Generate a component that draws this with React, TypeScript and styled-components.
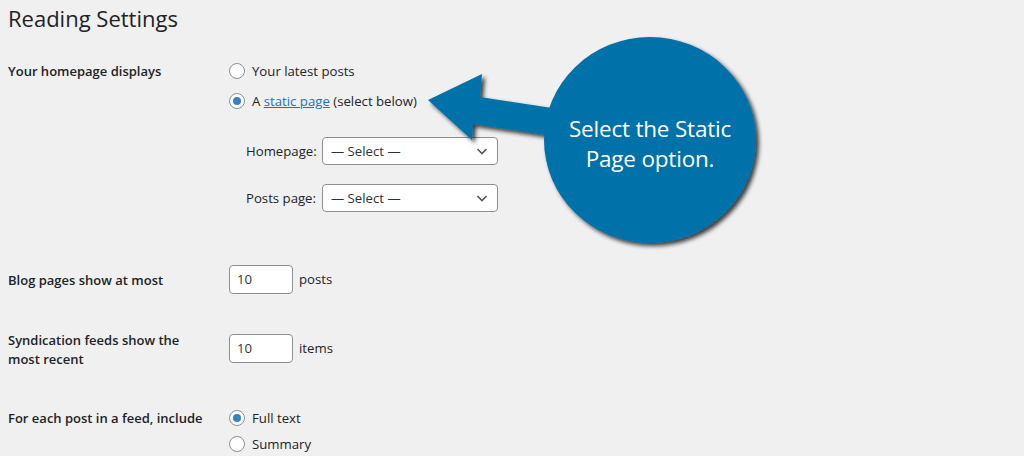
import React from 'react';
import styled, { createGlobalStyle } from 'styled-components';

const GlobalStyle = createGlobalStyle`
  html, body {
    margin: 0;
    padding: 0;
    background: #f0f0f1;
  }
  body {
    font-family: 'Open Sans', 'Noto Sans', sans-serif;
    color: #1d2327;
    font-size: 13px;
  }
`;

// Page
const Page = styled.div`
  position: relative;
  width: 1024px;
  height: 456px;
  overflow: hidden;
  padding: 0 8px;
  box-sizing: border-box;
`;

const Title = styled.h1`
  margin: 4px 0 0;
  font-size: 22px;
  font-weight: 400;
  line-height: 29px;
  color: #1d2327;
`;

const Form = styled.div`
  display: flex;
  flex-direction: column;
`;

interface RowProps {
  gap: number;
}

const Row = styled.div<RowProps>`
  display: grid;
  grid-template-columns: 221px 1fr;
  margin-top: ${(p: RowProps) => p.gap}px;
`;

interface LabelProps {
  top: number;
  lh?: number;
}

const RowLabel = styled.div<LabelProps>`
  width: 200px;
  padding-top: ${(p: LabelProps) => p.top}px;
  font-size: 13px;
  font-weight: 600;
  line-height: ${(p: LabelProps) => p.lh ?? 20}px;
`;

const Field = styled.div`
  display: flex;
  flex-direction: column;
`;

interface OptionProps {
  h: number;
}

const Option = styled.label<OptionProps>`
  display: flex;
  align-items: center;
  height: ${(p: OptionProps) => p.h}px;
  font-size: 13.2px;
  gap: 7px;
`;

interface RadioProps {
  checked?: boolean;
}

const Radio = styled.span<RadioProps>`
  width: 16px;
  height: 16px;
  box-sizing: border-box;
  border: 1px solid #8c8f94;
  border-radius: 50%;
  background: #fff;
  display: flex;
  align-items: center;
  justify-content: center;

  &::after {
    content: '';
    width: 8px;
    height: 8px;
    border-radius: 50%;
    background: ${(p: RadioProps) => (p.checked ? '#3582c4' : 'transparent')};
  }
`;

const Link = styled.a`
  color: #2271b1;
  text-decoration: underline;
`;

const SelectList = styled.div`
  display: flex;
  flex-direction: column;
  gap: 19px;
  margin-top: 21px;
  padding-left: 17px;
`;

const SelectRow = styled.div`
  display: flex;
  align-items: center;
  font-size: 13.2px;
`;

const SelectLabel = styled.span`
  width: 76px;
`;

const Select = styled.div`
  width: 176px;
  height: 28px;
  box-sizing: border-box;
  border: 1px solid #8c8f94;
  border-radius: 4px;
  background: #fff;
  display: flex;
  align-items: center;
  justify-content: space-between;
  padding: 0 8px;
  font-size: 13.2px;
  color: #2c3338;
`;

interface InputRowProps {
  offset?: number;
}

const InputRow = styled.div<InputRowProps>`
  display: flex;
  align-items: flex-start;
  gap: 6px;
  margin-top: ${(p: InputRowProps) => p.offset ?? 0}px;
  font-size: 13.2px;
  line-height: 29px;
`;

const NumberInput = styled.div`
  width: 64px;
  height: 29px;
  box-sizing: border-box;
  border: 1px solid #8c8f94;
  border-radius: 4px;
  background: #fff;
  display: flex;
  align-items: center;
  padding-left: 7px;
  font-size: 13.2px;
  color: #2c3338;
`;

// Callout overlay
const Overlay = styled.div`
  position: absolute;
  left: 0;
  top: 0;
  width: 1024px;
  height: 456px;
  pointer-events: none;
`;

const CalloutText = styled.div`
  position: absolute;
  left: 550px;
  top: 114px;
  width: 200px;
  text-align: center;
  color: #fff;
  font-family: 'Open Sans', 'Noto Sans', sans-serif;
  font-size: 22.5px;
  line-height: 30px;
  letter-spacing: -0.2px;
`;

const Chevron = () => (
  <svg width="14" height="14" viewBox="0 0 14 14">
    <path d="M2.5 5 L7 9.5 L11.5 5" fill="none" stroke="#50575e" strokeWidth="1.6" />
  </svg>
);

export default function App() {
  return (
    <>
      <GlobalStyle />
      <Page>
        <Title>Reading Settings</Title>
        <Form>
          <Row gap={23}>
            <RowLabel top={5}>Your homepage displays</RowLabel>
            <Field>
              <Option h={30}>
                <Radio />
                Your latest posts
              </Option>
              <Option h={30}>
                <Radio checked />
                <span>
                  A <Link>static page</Link> (select below)
                </span>
              </Option>
              <SelectList>
                <SelectRow>
                  <SelectLabel>Homepage:</SelectLabel>
                  <Select>
                    — Select —
                    <Chevron />
                  </Select>
                </SelectRow>
                <SelectRow>
                  <SelectLabel>Posts page:</SelectLabel>
                  <Select>
                    — Select —
                    <Chevron />
                  </Select>
                </SelectRow>
              </SelectList>
            </Field>
          </Row>

          <Row gap={53}>
            <RowLabel top={5}>Blog pages show at most</RowLabel>
            <InputRow>
              <NumberInput>10</NumberInput>
              <span>posts</span>
            </InputRow>
          </Row>

          <Row gap={37}>
            <RowLabel top={0} lh={19}>
              Syndication feeds show the most recent
            </RowLabel>
            <InputRow offset={3}>
              <NumberInput>10</NumberInput>
              <span>items</span>
            </InputRow>
          </Row>

          <Row gap={36}>
            <RowLabel top={3}>For each post in a feed, include</RowLabel>
            <Field>
              <Option h={26}>
                <Radio checked />
                Full text
              </Option>
              <Option h={26}>
                <Radio />
                Summary
              </Option>
            </Field>
          </Row>
        </Form>

        <Overlay>
          <svg width="1024" height="456" viewBox="0 0 1024 456">
            <defs>
              <filter id="shadow" x="-20%" y="-20%" width="140%" height="140%">
                <feDropShadow dx="3" dy="3" stdDeviation="2" floodColor="#000" floodOpacity="0.75" />
              </filter>
            </defs>
            <g filter="url(#shadow)" fill="#0071a9">
              <polygon points="428,100 482,74 480,97 565,110 560,137 473,124 472,140" />
              <ellipse cx="650" cy="140" rx="106" ry="103" />
            </g>
          </svg>
          <CalloutText>
            Select the Static
            <br />
            Page option.
          </CalloutText>
        </Overlay>
      </Page>
    </>
  );
}
